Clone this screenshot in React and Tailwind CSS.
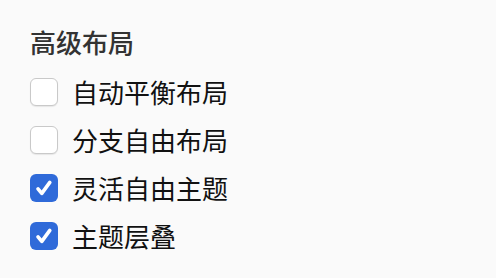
import React, { useState } from "react";

const OPTIONS = [
  { id: "auto", label: "自动平衡布局", checked: false },
  { id: "branch", label: "分支自由布局", checked: false },
  { id: "flex", label: "灵活自由主题", checked: true },
  { id: "stack", label: "主题层叠", checked: true },
];

function Box({ checked }) {
  if (checked) {
    return (
      <span className="flex h-[28px] w-[28px] shrink-0 items-center justify-center rounded-[6px] bg-[#2f6ad9]">
        <svg viewBox="0 0 24 24" className="h-[24px] w-[24px]" fill="none" stroke="white" strokeWidth="3.6" strokeLinecap="round" strokeLinejoin="round">
          <path d="M6 12.8l3.8 4.6 8-11" />
        </svg>
      </span>
    );
  }
  return <span className="h-[28px] w-[28px] shrink-0 rounded-[6px] border border-[#c9c9c9] bg-white shadow-[0_1px_1px_rgba(0,0,0,0.08)]" />;
}

export default function App() {
  const [opts, setOpts] = useState(OPTIONS);

  const toggle = (id) =>
    setOpts((list) => list.map((o) => (o.id === id ? { ...o, checked: !o.checked } : o)));

  return (
    <div className="h-[278px] w-[496px] bg-[#fafafa] pl-[30px] pt-[25px]" style={{ fontFamily: '"Noto Sans CJK SC", "Noto Sans", sans-serif' }}>
      <h3 className="text-[26px] leading-[34px] font-medium text-[#333]">高级布局</h3>
      <div className="mt-[9px] flex flex-col">
        {opts.map((o) => (
          <label key={o.id} className="flex h-[48px] cursor-pointer items-center gap-[14px]" onClick={() => toggle(o.id)}>
            <Box checked={o.checked} />
            <span className="text-[26px] leading-none text-[#111]">{o.label}</span>
          </label>
        ))}
      </div>
    </div>
  );
}
